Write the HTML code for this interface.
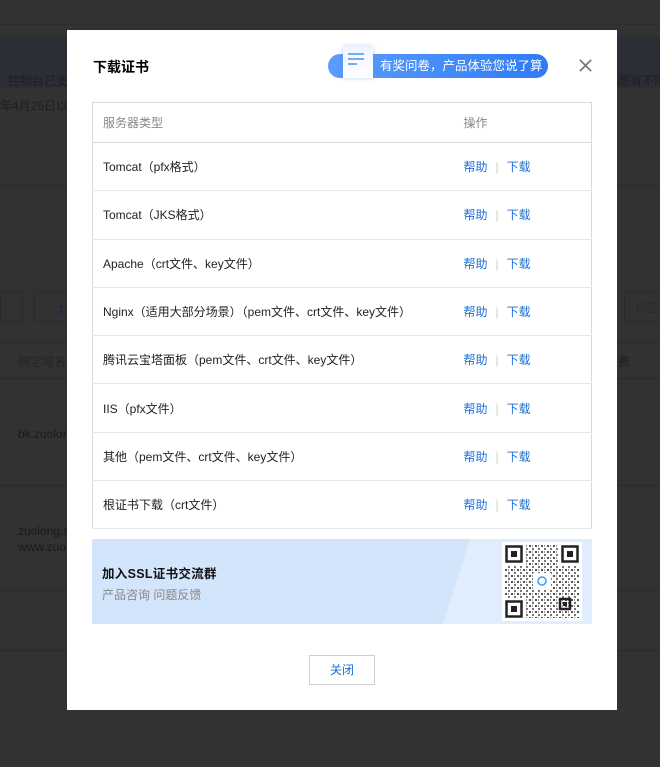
<!DOCTYPE html>
<html><head><meta charset="utf-8"><style>
*{margin:0;padding:0;box-sizing:border-box}
body{width:660px;height:767px;background:#323232;position:relative;overflow:hidden;font-family:"Liberation Sans","Noto Sans CJK SC",sans-serif;font-size:12px}
.bg{position:absolute;color:#1c1f26;white-space:nowrap}
.modal{position:absolute;left:67px;top:30px;width:550px;height:680px;background:#fff}
.title{position:absolute;left:26px;top:27px;font-size:14px;font-weight:bold;color:#000}
.x{position:absolute;left:511px;top:28px;width:15px;height:15px}
.pill{position:absolute;left:261px;top:24px;width:220px;height:24px;border-radius:12px;background:linear-gradient(90deg,#5b9dfb,#2f7bf5);color:#fff;font-size:12.5px;line-height:24px;padding-left:52px}
.doc{position:absolute;left:276px;top:16px;width:30px;height:32px;background:linear-gradient(#eef4ff,#fff);border-radius:3px 3px 0 0;box-shadow:0 0 4px rgba(80,140,255,.4)}
.doc i{position:absolute;left:5px;height:2px;background:#7aaaf5}
table{position:absolute;left:25px;top:72px;width:500px;border-collapse:collapse;border:1px solid #d6d9de}
td,th{height:48.3px;border-bottom:1px solid #e5e7eb;padding-left:10px;text-align:left;font-weight:normal;color:#222;font-size:12px}
th{height:40px;color:#888;border-bottom:1px solid #d6d9de}
.op{width:138px}
a{color:#1e6fd9;text-decoration:none}
.sep{color:#ccc;margin:0 8px}
.ban{position:absolute;left:25px;top:509px;width:500px;height:85px;background:#d3e5fb}
.ban .lt{position:absolute;left:0;top:0;width:500px;height:85px;background:#e0edfc;clip-path:polygon(378px 0,500px 0,500px 85px,351px 85px)}
.ban b{position:absolute;left:10px;top:24px;font-size:12.5px;color:#111;letter-spacing:.3px}
.ban span{position:absolute;left:10px;top:47px;color:#888}
.qr{position:absolute;left:410px;top:3px;width:80px;height:79px;background:#fff;padding:3px}
.close{position:absolute;left:242px;top:625px;width:66px;height:30px;border:1px solid #ccd0d6;text-align:center;line-height:28px;color:#1e6fd9}
</style></head><body>
<div class="bg" style="left:0;top:24px;width:660px;height:1px;background:#2c2c2c"></div>
<div class="bg" style="left:0;top:36px;width:660px;height:52px;background:#2b2e35"></div>
<div class="bg" style="left:8px;top:72px;font-size:12px">控制台已支</div>
<div class="bg" style="left:0;top:97px;font-size:12px">年4月25日以</div>
<div class="bg" style="left:618px;top:72px;font-size:12px">愿有不同</div>
<div class="bg" style="left:0;top:185px;width:660px;height:1px;background:#2a2a2a"></div>
<div class="bg" style="left:0;top:292px;width:23px;height:30px;border:1px solid #2a2a2a"></div>
<div class="bg" style="left:34px;top:292px;width:40px;height:30px;border:1px solid #2a2a2a;color:#1a2a44;padding:6px 20px">上</div>
<div class="bg" style="left:624px;top:292px;width:40px;height:30px;border:1px solid #2a2a2a;color:#2a2a2a;padding:6px 10px">标签</div>
<div class="bg" style="left:18px;top:353px;color:#252525">绑定域名</div>
<div class="bg" style="left:618px;top:353px;color:#1f1f1f">费</div>
<div class="bg" style="left:0;top:342px;width:660px;height:1px;background:#2a2a2a"></div>
<div class="bg" style="left:0;top:378px;width:660px;height:1px;background:#2a2a2a"></div>
<div class="bg" style="left:18px;top:427px;color:#1a1a1a">bk.zuolon</div>
<div class="bg" style="left:0;top:485px;width:660px;height:1px;background:#2a2a2a"></div>
<div class="bg" style="left:18px;top:523px;color:#1a1a1a;line-height:16px">zuolong.s<br>www.zuo</div>
<div class="bg" style="left:0;top:590px;width:660px;height:1px;background:#2a2a2a"></div>
<div class="bg" style="left:0;top:650px;width:660px;height:1px;background:#2a2a2a"></div>
<div class="modal">
<div class="title">下载证书</div>
<div class="pill">有奖问卷，产品体验您说了算</div>
<div class="doc"><i style="top:7px;width:16px"></i><i style="top:12px;width:16px"></i><i style="top:17px;width:9px"></i></div>
<svg class="x" viewBox="0 0 16 16"><path d="M2 2L14 14M14 2L2 14" stroke="#777" stroke-width="1.8"/></svg>
<table>
<tr><th>服务器类型</th><th class="op">操作</th></tr>
<tr><td>Tomcat（pfx格式）</td><td><a>帮助</a><span class="sep">|</span><a>下载</a></td></tr>
<tr><td>Tomcat（JKS格式）</td><td><a>帮助</a><span class="sep">|</span><a>下载</a></td></tr>
<tr><td>Apache（crt文件、key文件）</td><td><a>帮助</a><span class="sep">|</span><a>下载</a></td></tr>
<tr><td>Nginx（适用大部分场景）（pem文件、crt文件、key文件）</td><td><a>帮助</a><span class="sep">|</span><a>下载</a></td></tr>
<tr><td>腾讯云宝塔面板（pem文件、crt文件、key文件）</td><td><a>帮助</a><span class="sep">|</span><a>下载</a></td></tr>
<tr><td>IIS（pfx文件）</td><td><a>帮助</a><span class="sep">|</span><a>下载</a></td></tr>
<tr><td>其他（pem文件、crt文件、key文件）</td><td><a>帮助</a><span class="sep">|</span><a>下载</a></td></tr>
<tr><td>根证书下载（crt文件）</td><td><a>帮助</a><span class="sep">|</span><a>下载</a></td></tr>
</table>
<div class="ban"><div class="lt"></div><b>加入SSL证书交流群</b><span>产品咨询 问题反馈</span>
<div class="qr"><svg width="74" height="73" viewBox="0 0 74 73">
<defs><pattern id="p" width="6" height="6" patternUnits="userSpaceOnUse"><rect width="2" height="2" fill="#555"/><rect x="3" y="3" width="2" height="2" fill="#777"/><rect x="3" y="0" width="1" height="2" fill="#999"/></pattern></defs>
<rect width="74" height="73" fill="url(#p)"/>
<g fill="#fff"><rect x="0" y="0" width="20" height="20"/><rect x="54" y="0" width="20" height="20"/><rect x="0" y="53" width="20" height="20"/><rect x="28" y="28" width="18" height="16"/></g>
<g fill="none" stroke="#222" stroke-width="2.5"><rect x="1.5" y="1.5" width="15" height="15"/><rect x="57.5" y="1.5" width="15" height="15"/><rect x="1.5" y="56.5" width="15" height="15"/><rect x="55" y="54" width="10" height="10"/></g>
<g fill="#222"><rect x="6" y="6" width="6" height="6"/><rect x="62" y="6" width="6" height="6"/><rect x="6" y="61" width="6" height="6"/><rect x="58" y="57" width="4" height="4"/></g>
<circle cx="37" cy="36" r="4" fill="none" stroke="#3a9ef0" stroke-width="1.5"/>
</svg></div></div>
<div class="close">关闭</div>
</div>
</body></html>
